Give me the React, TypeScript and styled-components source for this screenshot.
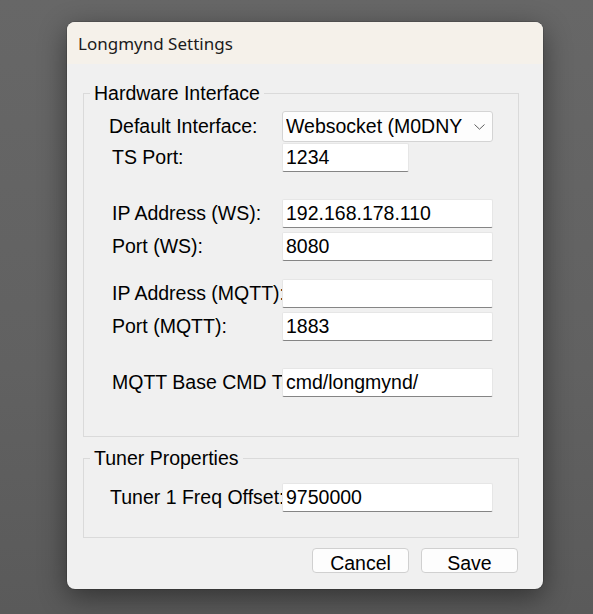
import styled, { createGlobalStyle } from 'styled-components';

const GlobalStyle = createGlobalStyle`
    html, body {
        margin: 0;
        padding: 0;
        height: 100%;
    }
    body {
        font-family: "Liberation Sans", Arial, sans-serif;
    }
`

const Desktop = styled.div`
    min-height: 100vh;
    box-sizing: border-box;
    padding: 22px 0 0 67px;
    background: linear-gradient(to bottom, #676767 0%, #616161 60%, #5a5a5a 100%);
`

const Dialog = styled.div`
    width: 476px;
    background: #f0f0f0;
    border-radius: 8px;
    overflow: hidden;
    box-shadow: 0 8px 28px rgba(0, 0, 0, 0.45), 0 0 0 1px rgba(0, 0, 0, 0.12);
`

const TitleBar = styled.div`
    height: 42px;
    display: flex;
    align-items: center;
    padding-left: 11px;
    background: #f5f1ea;
    font-family: "Noto Sans", "Open Sans", sans-serif;
    font-size: 17px;
    color: #1b1b1b;
`

const Body = styled.div`
    padding: 18px 24px 16px 16px;
`

const GroupBox = styled.fieldset<{ $top?: number; $bottom: number; $pad: number }>`
    margin: ${p => p.$top ?? 0}px 0 0 0;
    padding: ${p => p.$pad}px 0 ${p => p.$bottom}px 6px;
    border: 1px solid #dadada;
    min-width: 0;
`

const GroupTitle = styled.legend`
    padding: 0 4px;
    font-size: 19.5px;
    line-height: 22px;
    color: #000;
`

const Form = styled.div`
    margin-left: 19px;
`

const Row = styled.div<{ $gap?: number; $h?: number }>`
    display: grid;
    grid-template-columns: 173px 212px;
    align-items: center;
    height: ${p => p.$h ?? 29}px;
    margin-top: ${p => p.$gap ?? 0}px;
`

const Label = styled.span<{ $indent?: number }>`
    padding-left: ${p => p.$indent ?? 0}px;
    font-size: 19.5px;
    color: #000;
    white-space: nowrap;
`

const TextInput = styled.input<{ $w?: number }>`
    box-sizing: border-box;
    width: ${p => p.$w ?? 211}px;
    height: 29px;
    margin: 0;
    padding: 0 3px;
    border: 1px solid #e6e6e6;
    border-bottom: 1px solid #858585;
    border-radius: 2px;
    background: #fff;
    font-family: "Liberation Sans", Arial, sans-serif;
    font-size: 19.5px;
    color: #000;
    outline: none;
`

const Combo = styled.div`
    box-sizing: border-box;
    width: 211px;
    height: 31px;
    display: flex;
    align-items: center;
    padding: 0 7px 0 3px;
    border: 1px solid #d4d4d4;
    border-radius: 3px;
    background: #fdfdfd;
    font-size: 19.5px;
    color: #000;
`

const ComboText = styled.span`
    flex: 1;
    overflow: hidden;
    white-space: nowrap;
`

const Chevron = styled.svg`
    width: 11px;
    height: 6px;
    flex: none;
`

const ButtonRow = styled.div`
    display: flex;
    justify-content: flex-end;
    gap: 12px;
    margin-top: 10px;
    padding-right: 1px;
`

const Button = styled.button`
    box-sizing: border-box;
    width: 97px;
    height: 25px;
    padding: 4px 0 0;
    border: 1px solid #d0d0d0;
    border-radius: 4px;
    background: #fdfdfd;
    font-family: "Liberation Sans", Arial, sans-serif;
    font-size: 19.5px;
    line-height: 21px;
    color: #000;
    overflow: hidden;
`

export default function App() {
    return (
        <>
            <GlobalStyle />
            <Desktop>
                <Dialog>
                    <TitleBar>Longmynd Settings</TitleBar>
                    <Body>
                        <GroupBox $pad={7} $bottom={39}>
                            <GroupTitle>Hardware Interface</GroupTitle>
                            <Form>
                                <Row $h={31}>
                                    <Label>Default Interface:</Label>
                                    <Combo>
                                        <ComboText>Websocket (M0DNY</ComboText>
                                        <Chevron viewBox="0 0 11 6">
                                            <path d="M0.5 0.5 L5.5 5.2 L10.5 0.5" fill="none" stroke="#5f5f5f" strokeWidth="1" />
                                        </Chevron>
                                    </Combo>
                                </Row>
                                <Row $gap={1}>
                                    <Label $indent={3}>TS Port:</Label>
                                    <TextInput $w={127} defaultValue="1234" />
                                </Row>
                                <Row $gap={27}>
                                    <Label $indent={3}>IP Address (WS):</Label>
                                    <TextInput defaultValue="192.168.178.110" />
                                </Row>
                                <Row $gap={4}>
                                    <Label $indent={3}>Port (WS):</Label>
                                    <TextInput defaultValue="8080" />
                                </Row>
                                <Row $gap={18}>
                                    <Label $indent={3}>IP Address (MQTT):</Label>
                                    <TextInput defaultValue="" />
                                </Row>
                                <Row $gap={4}>
                                    <Label $indent={3}>Port (MQTT):</Label>
                                    <TextInput defaultValue="1883" />
                                </Row>
                                <Row $gap={27}>
                                    <Label $indent={3}>MQTT Base CMD Topic:</Label>
                                    <TextInput defaultValue="cmd/longmynd/" />
                                </Row>
                            </Form>
                        </GroupBox>
                        <GroupBox $top={10} $pad={14} $bottom={25}>
                            <GroupTitle>Tuner Properties</GroupTitle>
                            <Form>
                                <Row>
                                    <Label $indent={1}>Tuner 1 Freq Offset:</Label>
                                    <TextInput defaultValue="9750000" />
                                </Row>
                            </Form>
                        </GroupBox>
                        <ButtonRow>
                            <Button>Cancel</Button>
                            <Button>Save</Button>
                        </ButtonRow>
                    </Body>
                </Dialog>
            </Desktop>
        </>
    )
}
